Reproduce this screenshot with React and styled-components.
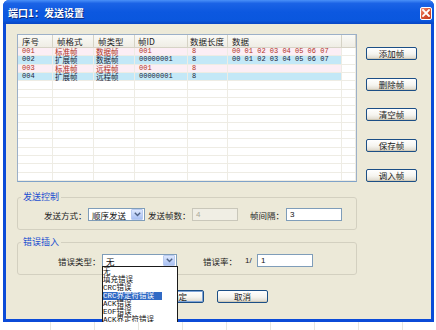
import React from 'react';
import styled, { createGlobalStyle } from 'styled-components';

const Global = createGlobalStyle`
  html, body { margin: 0; padding: 0; overflow: hidden; background: #fff; }
  body { font-family: "Noto Sans CJK SC", "DejaVu Sans", sans-serif; }
  * { box-sizing: border-box; }
`;

const Page = styled.div`
  width: 436px;
  height: 330px;
  overflow: hidden;
  padding-left: 3px;
  background-color: #fff;
  background-image: repeating-linear-gradient(90deg, transparent 0 43px, #e6e6e0 43px 44px);
  background-position: 7px 0;
`;

const Window = styled.div`
  width: 431px;
  height: 322px;
  display: flex;
  flex-direction: column;
  background: #0B4BD8;
  border-radius: 6px 6px 0 0;
  overflow: hidden;
  position: relative;
`;

const TitleBar = styled.div`
  height: 24px;
  flex: none;
  display: flex;
  align-items: center;
  justify-content: space-between;
  padding: 0 2px 0 5px;
  background: linear-gradient(180deg, #4A90F8 0%, #1B63E6 14%, #0C58E0 50%, #0A57DE 85%, #0846C4 100%);
  color: #fff;
  font-weight: bold;
  font-size: 10px;
  text-shadow: 1px 1px 0 #0A2A80;
`;

const CloseBtn = styled.div`
  width: 12px;
  height: 13px;
  margin-top: 2px;
  border: 1px solid #fff;
  border-radius: 2px;
  background: linear-gradient(135deg, #F0937A 0%, #DB5535 45%, #C23A1E 100%);
  display: flex;
  align-items: center;
  justify-content: center;
`;

const Body = styled.div`
  flex: 1;
  margin: 0 3px 3px;
  background: #ECE9D8;
  padding: 10px 0 0 11px;
  display: flex;
  flex-direction: column;
  position: relative;
`;

const TopRow = styled.div`
  display: flex;
  gap: 9px;
`;

const Table = styled.div`
  width: 340px;
  height: 148px;
  border: 1px solid #9CB0C8;
  border-bottom-color: #7FA2C8;
  background: #fff;
  display: flex;
  flex-direction: column;
`;

const cols = '35px 41px 41px 53px 40px 114px 1fr';

const HeaderRow = styled.div`
  height: 13px;
  flex: none;
  display: grid;
  grid-template-columns: ${cols};
  background: linear-gradient(180deg, #FAFAF7, #EFEDE5);
  border-bottom: 1px solid #D6D3C6;
`;

const HeadCell = styled.div`
  border-right: 1px solid #D6D3C6;
  padding-left: ${p => p.$pl ?? 4}px;
  font-size: 8.5px;
  line-height: 12px;
  color: #222;
  white-space: nowrap;
  overflow: hidden;
`;

const Rows = styled.div`
  flex: 1;
  display: flex;
  flex-direction: column;
`;

const Row = styled.div`
  flex: 1 1 0;
  min-height: 0;
  display: grid;
  grid-template-columns: ${cols};
  border-bottom: 1px solid #EEECE4;
  background: ${p => (p.$kind === 'std' ? '#FCEEF5' : p.$kind === 'ext' ? '#C3E8F7' : '#fff')};
  color: ${p => (p.$kind === 'std' ? '#B0301E' : '#1A1F3A')};
`;

const Cell = styled.div`
  border-right: 1px solid #EEECE4;
  padding-left: 2px;
  font-size: 7.5px;
  line-height: 7px;
  white-space: nowrap;
  overflow: visible;
  display: flex;
  align-items: center;
  background: ${p => (p.$filler ? '#fff' : 'transparent')};
`;

const Num = styled.span`
  font-family: "Liberation Mono", "DejaVu Sans Mono", monospace;
  font-size: 7px;
  padding-left: 2px;
`;

const SideButtons = styled.div`
  display: flex;
  flex-direction: column;
  gap: 17.5px;
  padding-top: 13px;
`;

const Btn = styled.button`
  width: 51px;
  height: 13px;
  padding: 0;
  border: 1px solid #1C4F86;
  border-radius: 2px;
  background: linear-gradient(180deg, #FFFFFF 0%, #F5F4EF 55%, #DCD7CB 100%);
  box-shadow: ${p => (p.$default ? 'inset 0 0 0 1px #7EA4D8' : 'inset 0 -1px 0 #D0CAB8')};
  font-family: "Noto Sans CJK SC", sans-serif;
  font-size: 8.5px;
  line-height: 11px;
  color: #1A1A1A;
  display: flex;
  align-items: center;
  justify-content: center;
`;

const Group = styled.fieldset`
  width: 340px;
  margin: ${p => p.$mt}px 0 0 0;
  padding: ${p => p.$pt}px 0 ${p => p.$pb}px 0;
  border: 1px solid #D3D0C0;
  border-radius: 3px;
  min-width: 0;
`;

const Legend = styled.legend`
  margin-left: 3px;
  padding: 0 2px;
  font-size: 9px;
  line-height: 10px;
  color: #1C4FD0;
`;

const FieldRow = styled.div`
  display: flex;
  align-items: center;
  height: 13px;
  padding-left: ${p => p.$pl}px;
`;

const Label = styled.span`
  width: ${p => p.$w}px;
  margin-left: ${p => p.$ml ?? 0}px;
  flex: none;
  font-size: 8.5px;
  color: #222;
  white-space: nowrap;
`;

const Small = styled.span`
  width: ${p => p.$w}px;
  flex: none;
  font-family: "Liberation Sans", sans-serif;
  font-size: 8px;
  color: #222;
`;

const SelectBox = styled.div`
  position: relative;
  width: ${p => p.$w}px;
  height: 13px;
  flex: none;
  border: 1px solid #7F9DB9;
  background: #fff;
  display: flex;
  align-items: center;
  justify-content: space-between;
  padding: 0 1px 0 3px;
  font-size: 8.5px;
  color: #111;
`;

const DropBtn = styled.div`
  width: 12px;
  height: 11px;
  border-radius: 1px;
  background: linear-gradient(180deg, #DCE7FD 0%, #BCCFF7 60%, #A9C0F2 100%);
  border: 1px solid #B9CBF1;
  display: flex;
  align-items: center;
  justify-content: center;
`;

const TextBox = styled.div`
  width: ${p => p.$w}px;
  height: 13px;
  flex: none;
  border: 1px solid ${p => (p.$disabled ? '#C9C7BA' : '#7F9DB9')};
  background: ${p => (p.$disabled ? '#F0EEE4' : '#fff')};
  color: ${p => (p.$disabled ? '#ACA899' : '#111')};
  font-family: "Liberation Sans", sans-serif;
  font-size: 8px;
  line-height: 11px;
  padding-left: 3px;
`;

const BottomRow = styled.div`
  display: flex;
  gap: 13px;
  margin-top: 15px;
  padding-left: 136px;
`;

const DropList = styled.div`
  position: absolute;
  top: 100%;
  left: -1px;
  width: 76px;
  background: #fff;
  border: 1px solid #1A1A1A;
  z-index: 5;
  padding-top: 1px;
  display: flex;
  flex-direction: column;
`;

const DropItem = styled.div`
  height: 8px;
  font-family: "Liberation Mono", "Noto Sans CJK SC", monospace;
  font-size: 7.5px;
  line-height: 8px;
  white-space: nowrap;
  color: #111;
  & > span {
    display: inline-block;
    background: ${p => (p.$sel ? '#316AC5' : 'transparent')};
    color: ${p => (p.$sel ? '#fff' : '#111')};
    padding-right: 8px;
  }
`;

const Chevron = () => (
  <svg width="7" height="5" viewBox="0 0 7 5">
    <path d="M0.8 0.8 L3.5 3.5 L6.2 0.8" fill="none" stroke="#4D6185" strokeWidth="1.4" />
  </svg>
);

const rows = [
  { id: '001', fmt: '标准帧', type: '数据帧', fid: '001', len: '8', data: '00 01 02 03 04 05 06 07', kind: 'std' },
  { id: '002', fmt: '扩展帧', type: '数据帧', fid: '00000001', len: '8', data: '00 01 02 03 04 05 06 07', kind: 'ext' },
  { id: '003', fmt: '标准帧', type: '远程帧', fid: '001', len: '8', data: '', kind: 'std' },
  { id: '004', fmt: '扩展帧', type: '远程帧', fid: '00000001', len: '8', data: '', kind: 'ext' },
];

const errorTypes = ['无', '填充错误', 'CRC错误', 'CRC界定符错误', 'ACK错误', 'EOF错误', 'ACK界定符错误', '位错误'];

export default function App() {
  const empties = Array.from({ length: 12 });
  return (
    <>
      <Global />
      <Page>
        <Window>
          <TitleBar>
            <span>端口1：发送设置</span>
            <CloseBtn>
              <svg width="8" height="8" viewBox="0 0 8 8">
                <path d="M1 1 L7 7 M7 1 L1 7" stroke="#fff" strokeWidth="1.8" strokeLinecap="square" />
              </svg>
            </CloseBtn>
          </TitleBar>
          <Body>
            <TopRow>
              <Table>
                <HeaderRow>
                  <HeadCell>序号</HeadCell>
                  <HeadCell>帧格式</HeadCell>
                  <HeadCell>帧类型</HeadCell>
                  <HeadCell $pl={3}>帧ID</HeadCell>
                  <HeadCell $pl={2}>数据长度</HeadCell>
                  <HeadCell>数据</HeadCell>
                  <HeadCell />
                </HeaderRow>
                <Rows>
                  {rows.map(r => (
                    <Row key={r.id} $kind={r.kind}>
                      <Cell><Num>{r.id}</Num></Cell>
                      <Cell>{r.fmt}</Cell>
                      <Cell>{r.type}</Cell>
                      <Cell><Num>{r.fid}</Num></Cell>
                      <Cell><Num>{r.len}</Num></Cell>
                      <Cell><Num>{r.data}</Num></Cell>
                      <Cell $filler />
                    </Row>
                  ))}
                  {empties.map((_, i) => (
                    <Row key={'e' + i}>
                      <Cell /><Cell /><Cell /><Cell /><Cell /><Cell /><Cell />
                    </Row>
                  ))}
                </Rows>
              </Table>
              <SideButtons>
                <Btn>添加帧</Btn>
                <Btn>删除帧</Btn>
                <Btn>清空帧</Btn>
                <Btn>保存帧</Btn>
                <Btn>调入帧</Btn>
              </SideButtons>
            </TopRow>

            <Group $mt={10} $pt={6} $pb={8}>
              <Legend>发送控制</Legend>
              <FieldRow $pl={26}>
                <Label $w={44}>发送方式：</Label>
                <SelectBox $w={57}>
                  <span>顺序发送</span>
                  <DropBtn><Chevron /></DropBtn>
                </SelectBox>
                <Label $w={44} $ml={3}>发送帧数：</Label>
                <TextBox $w={46} $disabled>4</TextBox>
                <Label $w={36} $ml={12}>帧间隔：</Label>
                <TextBox $w={56}>3</TextBox>
              </FieldRow>
            </Group>

            <Group $mt={7} $pt={7} $pb={7}>
              <Legend>错误插入</Legend>
              <FieldRow $pl={40}>
                <Label $w={44}>错误类型：</Label>
                <SelectBox $w={75}>
                  <span>无</span>
                  <DropBtn><Chevron /></DropBtn>
                  <DropList>
                    {errorTypes.map(t => (
                      <DropItem key={t} $sel={t === 'CRC界定符错误'}><span>{t}</span></DropItem>
                    ))}
                  </DropList>
                </SelectBox>
                <Label $w={42} $ml={26}>错误率：</Label>
                <Small $w={12}>1/</Small>
                <TextBox $w={56}>1</TextBox>
              </FieldRow>
            </Group>

            <BottomRow>
              <Btn $default>确定</Btn>
              <Btn>取消</Btn>
            </BottomRow>
          </Body>
        </Window>
      </Page>
    </>
  );
}
